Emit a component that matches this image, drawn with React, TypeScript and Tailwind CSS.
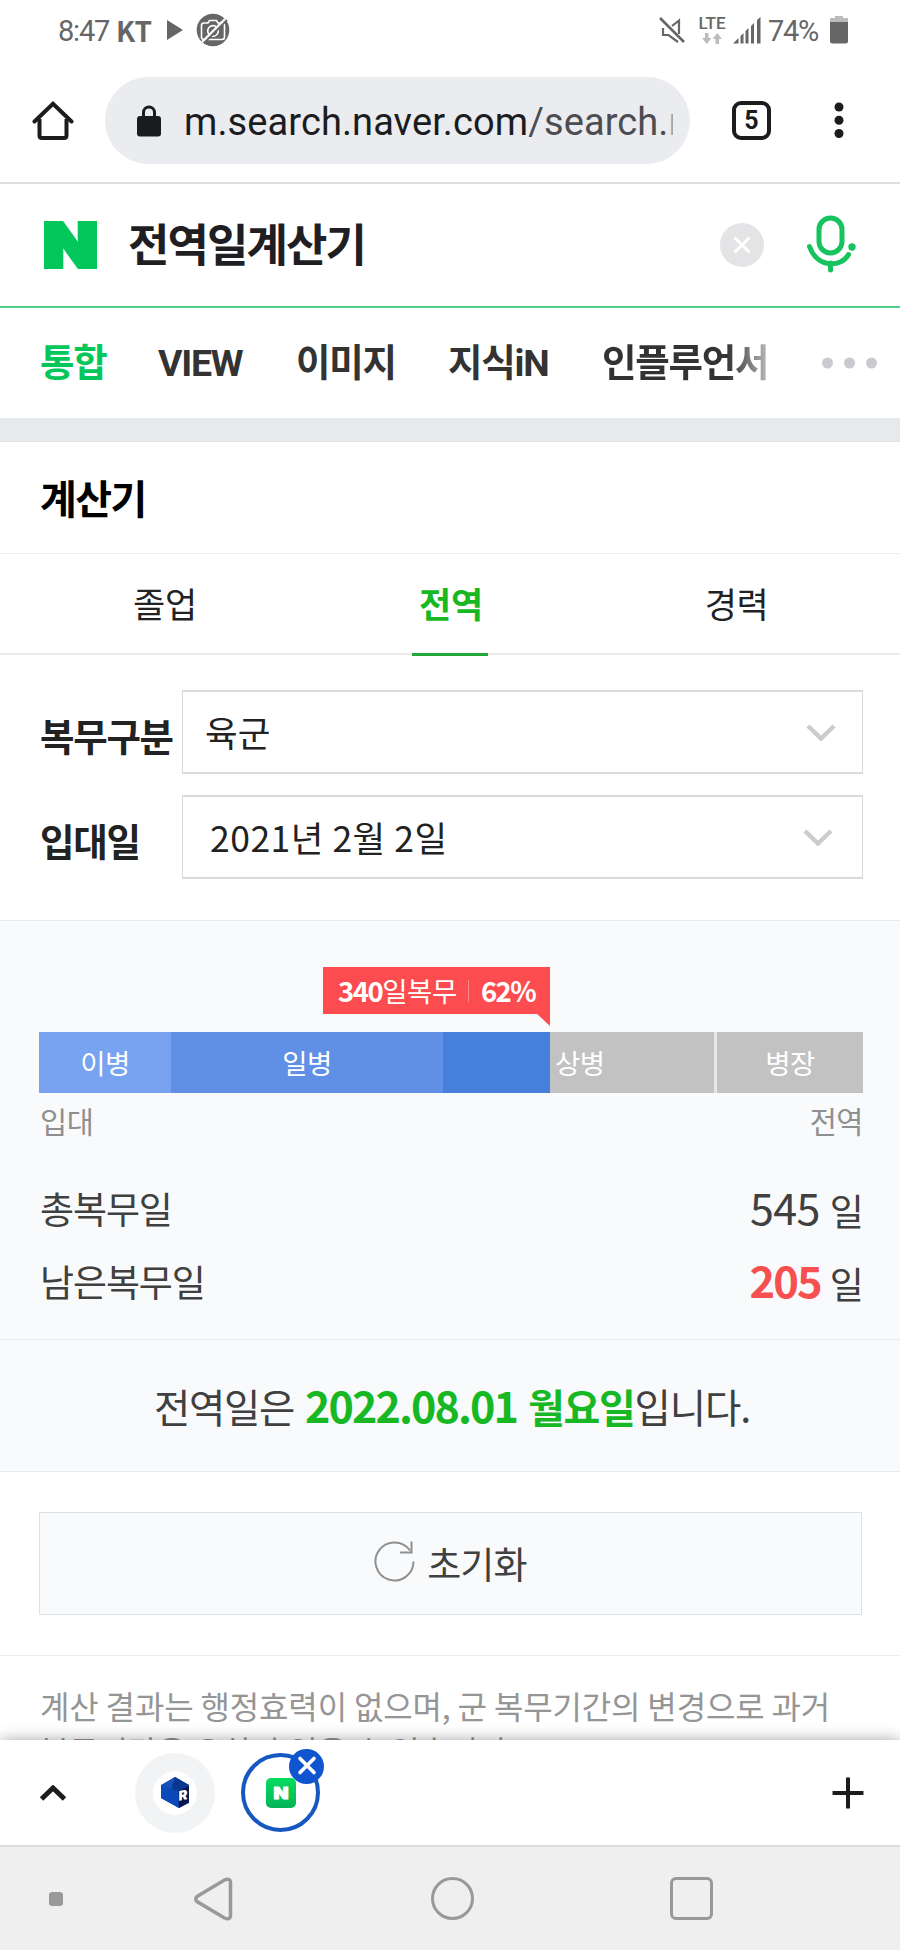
import * as React from "react"
import clsx from "clsx"

const ROBOTO = "font-[Roboto,'Noto_Sans_CJK_KR',sans-serif]"
const NOTO = "font-['Noto_Sans_CJK_KR',sans-serif]"

interface SelectRowProps {
  label: string
  value: string
  className?: string
  valueClassName?: string
}

interface StatRowProps {
  label: string
  value: string
  highlight?: boolean
}

const searchTabs = [
  { label: "통합", className: "ml-10 w-[118px] text-[#03c75a]" },
  { label: "VIEW", className: "w-[138px] text-[#333]" },
  { label: "이미지", className: "w-[152px] text-[#333]" },
  { label: "지식iN", className: "w-[154px] text-[#333]" },
]

const ranks = [
  { label: "이병", className: "w-[132px] justify-center bg-[#78a3f0]" },
  { label: "일병", className: "w-[272px] justify-center bg-[#6090e6]" },
  { label: "", className: "w-[107px] bg-[#467fdc]" },
  { label: "상병", className: "w-[164px] pl-[5px] bg-[#c2c2c2]" },
  { label: "", className: "w-[3px] bg-[#e6e7e8]" },
  { label: "병장", className: "flex-1 justify-center bg-[#c2c2c2]" },
]

const StatusBar: React.FC = () => (
  <div className={clsx("flex h-[60px] shrink-0 items-center pl-[58px] pr-[51px] text-[#666]", ROBOTO)}>
    <span className="w-[58px] text-[29px] leading-[60px] tracking-[-1.2px] pt-0.5">8:47</span>
    <span className={clsx("w-[51px] text-[28px] font-bold leading-[56px]", NOTO)}>KT</span>
    <svg className="h-5 w-4" viewBox="0 0 16 20" fill="#666"><path d="M0 0L16 10L0 20Z" /></svg>
    <svg className="ml-[13px] h-[34px] w-[34px]" viewBox="0 0 34 34" fill="none">
      <circle cx="17" cy="17" r="16.3" fill="#666" />
      <path d="M8 10H12L13.5 7.5H20.5L22 10H26Q28.500 10 28.500 12.500V24Q28.500 26.500 26 26.500H8Q5.500 26.500 5.500 24V12.500Q5.500 10 8 10Z" stroke="#fff" strokeWidth="1.6" />
      <circle cx="17" cy="18" r="5.300" stroke="#fff" strokeWidth="1.7" />
      <path d="M8 30L31 7" stroke="#666" strokeWidth="2" />
      <path d="M6 29L29 6" stroke="#fff" strokeWidth="2.300" />
    </svg>
    <svg className="ml-auto h-[27px] w-[26px]" viewBox="0 0 26 27" fill="none" stroke="#666" strokeWidth="2.200">
      <path d="M1 1L25 25" strokeWidth="2.600" />
      <path d="M13 9L20 3.500V17M4 11V18H9.500L19 25" />
    </svg>
    <div className="ml-[13px] flex w-[28px] flex-col items-center">
      <span className="text-[17px] font-medium leading-[15px]">LTE</span>
      <svg className="mt-0.5 h-[11px] w-5" viewBox="0 0 20 11" fill="#bbb">
        <path d="M3 0H6.500V5H9.500L4.750 11L0 5H3Z" />
        <path d="M13.500 11H17V6H20L15.250 0L10.500 6H13.500Z" />
      </svg>
    </div>
    <svg className="ml-[7px] h-[27px] w-[28px]" viewBox="0 0 28 27" fill="#666">
      <path d="M0 26.500L5.500 21V26.500ZM7.500 19L10.500 16V26.500H7.500ZM12.500 14L15.500 11V26.500H12.500ZM18 9L21 6V26.500H18ZM24 3L27.500 0V26.500H24Z" />
    </svg>
    <span className="ml-[7px] w-[62px] text-[29px] leading-[60px] tracking-[-1.3px] pt-0.5">74%</span>
    <svg className="h-[28px] w-[19px]" viewBox="0 0 19 28">
      <path d="M5 0H13V2H18V8H0V2H5Z" fill="#bbb" />
      <path d="M0 6H18V25Q18 27.500 15.500 27.500H2.500Q0 27.500 0 25Z" fill="#666" />
    </svg>
  </div>
)

const AddressBar: React.FC = () => (
  <div className={clsx("flex h-[124px] shrink-0 items-start border-b-2 border-[#dedede] pt-[17px] text-[#1b1c1e]", ROBOTO)}>
    <svg className="ml-8 mt-6 h-10 w-[42px]" viewBox="0 0 42 40" fill="none" stroke="#1b1c1e" strokeWidth="4">
      <path d="M2.500 20.500L21 2.800L39.500 20.500" strokeLinecap="round" />
      <path d="M7.500 18V34.500Q7.500 37 10 37H32Q34.500 37 34.500 34.500V18" />
    </svg>
    <div className="ml-[31px] flex h-[87px] w-[585px] items-center rounded-full bg-[#ebecf0]">
      <svg className="ml-8 h-8 w-6" viewBox="0 0 24 32">
        <path d="M6.500 12V7.500A5.500 5.500 0 0 1 17.500 7.500V12" fill="none" stroke="#1b1c1e" strokeWidth="3" />
        <rect y="11" width="24" height="20.500" rx="3" fill="#1b1c1e" />
      </svg>
      <div className="ml-[23px] w-[489px] overflow-hidden whitespace-nowrap pt-[3px] text-[38px] leading-[84px] tracking-[0.1px]">
        m.search.naver.com<span className="text-[#4c4d51]">/search.<span className="text-[#a5a6aa]">n</span></span>
      </div>
    </div>
    <div className="ml-[42px] mt-6 flex h-[39px] w-[39px] items-center justify-center rounded-[9px] border-4 border-[#1b1c1e] text-[25px] font-bold leading-none">5</div>
    <svg className="ml-[63px] mt-6 h-10 w-[10px]" viewBox="0 0 10 40" fill="#1b1c1e">
      <circle cx="5" cy="6" r="4.500" />
      <circle cx="5" cy="19.300" r="4.500" />
      <circle cx="5" cy="32.500" r="4.500" />
    </svg>
  </div>
)

const SearchHeader: React.FC = () => (
  <div className="flex h-[124px] shrink-0 items-center border-b-2 border-[#4fcf8c]">
    <svg className="ml-[38px] h-[60px] w-[66px]" viewBox="0 0 66 60">
      <text x="5" y="52" textLength="55" lengthAdjust="spacingAndGlyphs" fontFamily="Inter, sans-serif" fontWeight="900" fontSize="60" fill="#03c75a" stroke="#03c75a" strokeWidth="4">N</text>
    </svg>
    <span className={clsx("mb-[5px] ml-6 text-[45px] font-bold leading-[112px] tracking-[-1.9px] text-[#1e1e23]", NOTO)}>전역일계산기</span>
    <svg className="ml-auto h-11 w-11" viewBox="0 0 44 44">
      <circle cx="22" cy="22" r="22" fill="#e4e4e7" />
      <path d="M14.500 14.500L29.500 29.500M29.500 14.500L14.500 29.500" stroke="#fff" strokeWidth="3" />
    </svg>
    <svg className="mb-[3px] ml-[43px] mr-[43px] h-[58px] w-[50px]" viewBox="0 0 50 58" fill="none" stroke="#17c35e" strokeWidth="5" strokeLinecap="round">
      <rect x="12" y="3" width="23" height="35" rx="11.500" />
      <path d="M2.500 31.500C10 53 34 53 41.500 39.500M23.500 48V55" />
      <circle cx="45" cy="32" r="3.700" fill="#17c35e" stroke="none" />
    </svg>
  </div>
)

const SearchTabs: React.FC = () => (
  <div className={clsx("flex h-[110px] shrink-0 items-center text-[37.5px] font-bold leading-[108px] tracking-[-1.25px]", ROBOTO)}>
    {searchTabs.map((tab) => (
      <span key={tab.label} className={clsx("whitespace-nowrap", tab.className)}>{tab.label}</span>
    ))}
    <span className="whitespace-nowrap bg-gradient-to-r from-[#333] from-75% to-[#bbb] bg-clip-text text-transparent">인플루언서</span>
    <svg className="ml-auto mr-[23px] h-3 w-[55px]" viewBox="0 0 55 12" fill="#c9cad0">
      <circle cx="5.500" cy="6" r="5.500" />
      <circle cx="27.500" cy="6" r="5.500" />
      <circle cx="49.500" cy="6" r="5.500" />
    </svg>
  </div>
)

const CalculatorTabs: React.FC = () => (
  <div className="flex h-[101px] shrink-0 border-b-2 border-[#ebebeb] text-[35px] leading-[97px] tracking-[-0.3px] text-[#222]">
    <span className="w-[331px] text-center">졸업</span>
    <span className="flex w-[242px] justify-center">
      <span className="h-[102px] w-[76px] border-b-[3px] border-[#22a838] pl-px text-center font-bold text-[#18b724]">전역</span>
    </span>
    <span className="w-[330px] pl-0.5 text-center">경력</span>
  </div>
)

const SelectRow: React.FC<SelectRowProps> = ({ label, value, className, valueClassName }) => (
  <div className="flex h-[84px] items-center">
    <span className="w-[142px] whitespace-nowrap pt-1.5 text-[37.5px] font-bold leading-[80px] tracking-[-1.3px] text-[#222]">{label}</span>
    <div className={clsx("flex h-full w-[681px] items-center justify-between border-x border-y-2 border-[#dadada]", className)}>
      <span className={clsx("text-[35.5px] leading-[80px] text-[#222]", valueClassName)}>{value}</span>
      <svg className="h-[18px] w-[30px]" viewBox="0 0 30 18" fill="none" stroke="#ccc" strokeWidth="4.500">
        <path d="M2 3L15 15.500L28 3" />
      </svg>
    </div>
  </div>
)

const StatRow: React.FC<StatRowProps> = ({ label, value, highlight = false }) => (
  <div className="flex h-[73px] items-baseline justify-between text-[37px] leading-[73px] tracking-[-0.9px] text-[#404040]">
    <span className="ml-px tracking-[-1.1px]">{label}</span>
    <span className="relative top-px flex items-baseline">
      <span className={clsx(
        highlight
          ? "mr-[9px] text-[43.5px] font-bold tracking-[-1.9px] text-[#f65050]"
          : "mr-[10px] text-[43px] tracking-[-0.6px]"
      )}>
        {value}
      </span>
      <span className="relative top-px">일</span>
    </span>
  </div>
)

const TabStrip: React.FC = () => (
  <div className="relative flex h-[105px] shrink-0 items-center bg-white shadow-[0_0_14px_rgba(0,0,0,0.35)]">
    <svg className="ml-[39px] h-4 w-7" viewBox="0 0 28 16" fill="none" stroke="#1b1c1e" strokeWidth="5">
      <path d="M2.500 14L14 3L25.500 14" />
    </svg>
    <div className="ml-[68px] flex h-20 w-20 items-center justify-center rounded-full bg-[#f1f3f5]">
      <div className="flex h-11 w-11 items-center justify-center rounded-full bg-white">
        <svg className="h-[31px] w-[30px]" viewBox="0 0 30 31">
          <path d="M15 0L29 8V26L19 31L1 21V8Z" fill="#0c45ab" />
          <path d="M15 0L1 9L11 14Z" fill="#1650b8" />
          <path d="M15 0L29 8L19 14H11Z" fill="#0a3690" />
          <path d="M1 9L19 14V31L1 21Z" fill="#0b49bb" />
          <path d="M18 14L29 9V25L19 31Z" fill="#05174e" />
          <text x="18.500" y="26.500" fontFamily="Inter, sans-serif" fontWeight="900" fontSize="13.500" fill="#fff" transform="skewY(-12) translate(0 1.500)">R</text>
        </svg>
      </div>
    </div>
    <div className="relative ml-[26px] flex h-[79px] w-[79px] items-center justify-center rounded-full border-4 border-[#1757c2]">
      <svg className="h-[30px] w-[30px]" viewBox="0 0 30 30">
        <defs>
          <linearGradient id="naver" x1="0" y1="0" x2="0" y2="1">
            <stop offset="0" stopColor="#05dc60" />
            <stop offset="1" stopColor="#06b457" />
          </linearGradient>
        </defs>
        <rect width="30" height="30" rx="5" fill="url(#naver)" />
        <text x="7.500" y="20.700" textLength="15" lengthAdjust="spacingAndGlyphs" fontFamily="Inter, sans-serif" fontWeight="900" fontSize="16.500" fill="#fff" stroke="#fff" strokeWidth="1">N</text>
      </svg>
      <svg className="absolute -right-[8px] -top-[8px] h-[35px] w-[35px]" viewBox="0 0 35 35">
        <circle cx="17.500" cy="17.500" r="17.500" fill="#0f55cf" />
        <path d="M11 9.500L25 23.500M25 9.500L11 23.500" stroke="#fff" strokeWidth="3.600" strokeLinecap="round" />
      </svg>
    </div>
    <svg className="ml-auto mr-[36px] h-8 w-8" viewBox="0 0 32 32" stroke="#1b1c1e" strokeWidth="4">
      <path d="M0.500 16H31.500M16 0.500V31.500" />
    </svg>
  </div>
)

const NavBar: React.FC = () => (
  <div className="relative flex h-[105px] shrink-0 items-center border-t-2 border-[#dcdcdc] bg-[#efefef]">
    <div className="ml-[49px] h-[14px] w-[14px] rounded-[3px] bg-[#999]" />
    <svg className="ml-[131px] h-[44px] w-[39px]" viewBox="0 0 39 44" fill="none" stroke="#999" strokeWidth="3.500">
      <path d="M3 19.500L30.500 3Q36.500 0.500 36.500 6V38Q36.500 43.500 30.500 41L3 24.500Q0.500 22 3 19.500Z" />
    </svg>
    <div className="ml-[198px] h-[43px] w-[43px] rounded-full border-[3px] border-[#999]" />
    <div className="ml-[196px] h-[43px] w-[43px] rounded-[6px] border-[3px] border-[#999]" />
  </div>
)

export default function App() {
  return (
    <div className={clsx("flex h-[1950px] w-[900px] flex-col overflow-hidden bg-white", NOTO)}>
      <StatusBar />
      <AddressBar />
      <SearchHeader />
      <SearchTabs />
      <div className="h-6 shrink-0 border-b border-[#dfe3e6] bg-[#e6eaed]" />

      <h2 className="h-[112px] shrink-0 border-b border-[#ebebeb] pl-10 text-[40px] font-bold leading-[110px] tracking-[-1.6px] text-black">계산기</h2>
      <CalculatorTabs />

      <div className="flex h-[265px] shrink-0 flex-col gap-[21px] pl-10 pt-[35px]">
        <SelectRow label="복무구분" value="육군" className="pl-[22px] pr-[26px]" />
        <SelectRow label="입대일" value="2021년 2월 2일" className="pl-[27px] pr-[29px]" valueClassName="tracking-[0.5px]" />
      </div>

      <section className="h-[420px] shrink-0 border-y border-[#e9ecef] bg-[#f9fafc] pl-[39px] pr-[37px] pt-[46px]">
        <div className="relative ml-[284px] flex h-[47px] w-[227px] items-center bg-[#fc4c4f] pl-[15px] text-[27.5px] leading-[47px] text-white">
          <span className="font-bold tracking-[-1.5px]">340</span>
          <span className="tracking-[-0.4px]">일복무</span>
          <span className="ml-[11px] h-[22px] w-px bg-[#fd8a8c]" />
          <span className="ml-3 font-bold tracking-[-1.5px]">62%</span>
          <svg className="absolute right-0 top-[46px] h-[13px] w-[14px]" viewBox="0 0 14 13" fill="#fc4c4f"><path d="M0 0H14V13Z" /></svg>
        </div>
        <div className="mt-[18px] flex h-[61px] text-[27.5px] tracking-[-0.5px] text-white">
          {ranks.map((rank, index) => (
            <div key={index} className={clsx("flex items-center", rank.className)}>{rank.label}</div>
          ))}
        </div>
        <div className="flex h-[53px] justify-between text-[29.500px] leading-[55px] tracking-[-0.5px] text-[#8f8f8f]">
          <span className="ml-px">입대</span>
          <span>전역</span>
        </div>
        <div className="pt-[23px]">
          <StatRow label="총복무일" value="545" />
          <StatRow label="남은복무일" value="205" highlight />
        </div>
      </section>

      <section className="flex h-[132px] shrink-0 items-baseline justify-center border-b border-[#e9ecef] bg-[#f9fafc] pl-1 text-[39.500px] leading-[128px] tracking-[-1.3px] text-[#404040]">
        <span>전역일은</span>
        <strong className="ml-[11px] text-[43px] font-bold tracking-[-1.9px] text-[#18b724]">2022.08.01</strong>
        <strong className="ml-[11px] text-[40px] font-bold tracking-[-1.3px] text-[#18b724]">월요일</strong>
        <span className="tracking-[-1.1px]">입니다.</span>
      </section>

      <div className="h-[184px] shrink-0 border-b border-[#ebeef0] pl-[39px] pr-[38px] pt-10">
        <button className="flex h-[103px] w-full items-center justify-center gap-3 border border-[#dde1e4] bg-[#f9fafc] text-[37px] tracking-[-0.8px] text-[#404040]">
          <svg className="mb-1 h-[41px] w-[41px]" viewBox="0 0 41 41" fill="none" stroke="#8f8f8f" strokeWidth="2">
            <path d="M36 9.500A19 19 0 1 0 39.500 20.500M37.500 0.500V11.500H26" />
          </svg>
          초기화
        </button>
      </div>

      <p className="h-[84px] shrink-0 whitespace-nowrap pl-10 pt-[27px] text-[32px] leading-[45px] tracking-[-0.15px] text-[#959595]">
        계산 결과는 행정효력이 없으며, 군 복무기간의 변경으로 과거
        <br />
        복무기간은 오차가 있을 수 있습니다.
      </p>

      <TabStrip />
      <NavBar />
    </div>
  )
}
